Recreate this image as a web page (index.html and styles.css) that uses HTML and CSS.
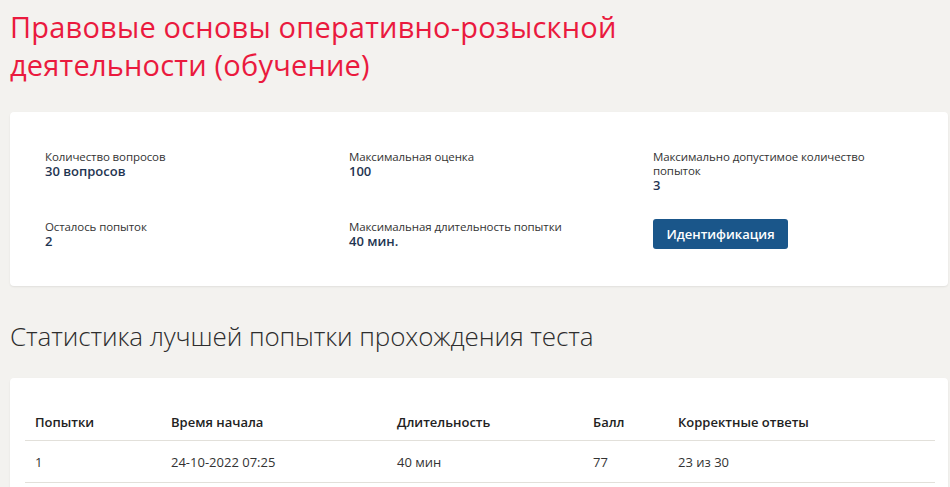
FILE: index.html
```html
<!DOCTYPE html>
<html lang="ru">
<head>
<meta charset="utf-8">
<title>Правовые основы оперативно-розыскной деятельности (обучение)</title>
<link rel="stylesheet" href="styles.css">
</head>
<body>
<div class="page">
  <h1 class="title">Правовые основы оперативно-розыскной деятельности (обучение)</h1>

  <section class="card info">
    <div class="info-grid">
      <div class="item">
        <div class="label">Количество вопросов</div>
        <div class="value">30 вопросов</div>
      </div>
      <div class="item">
        <div class="label">Максимальная оценка</div>
        <div class="value">100</div>
      </div>
      <div class="item">
        <div class="label">Максимально допустимое количество<br>попыток</div>
        <div class="value">3</div>
      </div>
      <div class="item">
        <div class="label">Осталось попыток</div>
        <div class="value">2</div>
      </div>
      <div class="item">
        <div class="label">Максимальная длительность попытки</div>
        <div class="value">40 мин.</div>
      </div>
      <div class="item">
        <button class="btn" type="button">Идентификация</button>
      </div>
    </div>
  </section>

  <h2 class="subtitle">Статистика лучшей попытки прохождения теста</h2>

  <section class="card stats">
    <table class="table">
      <colgroup>
        <col class="c1"><col class="c2"><col class="c3"><col class="c4"><col class="c5">
      </colgroup>
      <thead>
        <tr><th>Попытки</th><th>Время начала</th><th>Длительность</th><th>Балл</th><th>Корректные ответы</th></tr>
      </thead>
      <tbody>
        <tr><td>1</td><td>24-10-2022 07:25</td><td>40 мин</td><td>77</td><td>23 из 30</td></tr>
      </tbody>
    </table>
  </section>
</div>
</body>
</html>
```
FILE: styles.css
```css
* { box-sizing: border-box; }
html, body { margin: 0; padding: 0; }
body {
  background: #f3f2ef;
  font-family: "Open Sans", "Noto Sans", sans-serif;
  color: #333;
  overflow: hidden;
}
.page {
  padding: 8px 2px 0 10px;
}
.title {
  margin: 0;
  font-size: 29px;
  line-height: 38px;
  font-weight: 500;
  color: #ea1a3e;
  width: 660px;
  letter-spacing: 0.2px;
}
.card {
  background: #fff;
  border-radius: 4px;
  box-shadow: 0 1px 2px rgba(0,0,0,0.08);
}
.info {
  margin-top: 28px;
  padding: 38px 35px 37px 35px;
}
.info-grid {
  display: grid;
  grid-template-columns: 304px 304px 250px;
  row-gap: 27px;
}
.label {
  font-size: 11.5px;
  line-height: 14px;
  color: #333;
  letter-spacing: -0.1px;
}
.value {
  font-size: 13px;
  line-height: 15px;
  font-weight: 600;
  color: #1f3552;
}
.btn {
  display: block;
  margin-top: -1px;
  width: 135px;
  height: 30px;
  border: 0;
  border-radius: 3px;
  background: #1a568a;
  color: #fff;
  font-family: "Open Sans", "Noto Sans", sans-serif;
  font-size: 13px;
  font-weight: 600;
  padding: 0;
}
.subtitle {
  margin: 35px 0 0 0;
  font-size: 26px;
  line-height: 30px;
  font-weight: 300;
  color: #2d2d2d;
  letter-spacing: -0.1px;
}
.stats {
  margin-top: 27px;
  padding: 26px 13px 20px 15px;
}
.table {
  width: 910px;
  border-collapse: collapse;
  font-size: 13px;
}
.c1 { width: 136px; }
.c2 { width: 226px; }
.c3 { width: 196px; }
.c4 { width: 85px; }
.c5 { width: 267px; }
.table th {
  text-align: left;
  font-weight: 600;
  color: #222;
  padding: 8px 10px;
  line-height: 20px;
  border-bottom: 1px solid #e2e0da;
}
.table td {
  padding: 11px 10px 10px 10px;
  line-height: 20px;
  color: #333;
  border-bottom: 1px solid #e2e0da;
}
```
